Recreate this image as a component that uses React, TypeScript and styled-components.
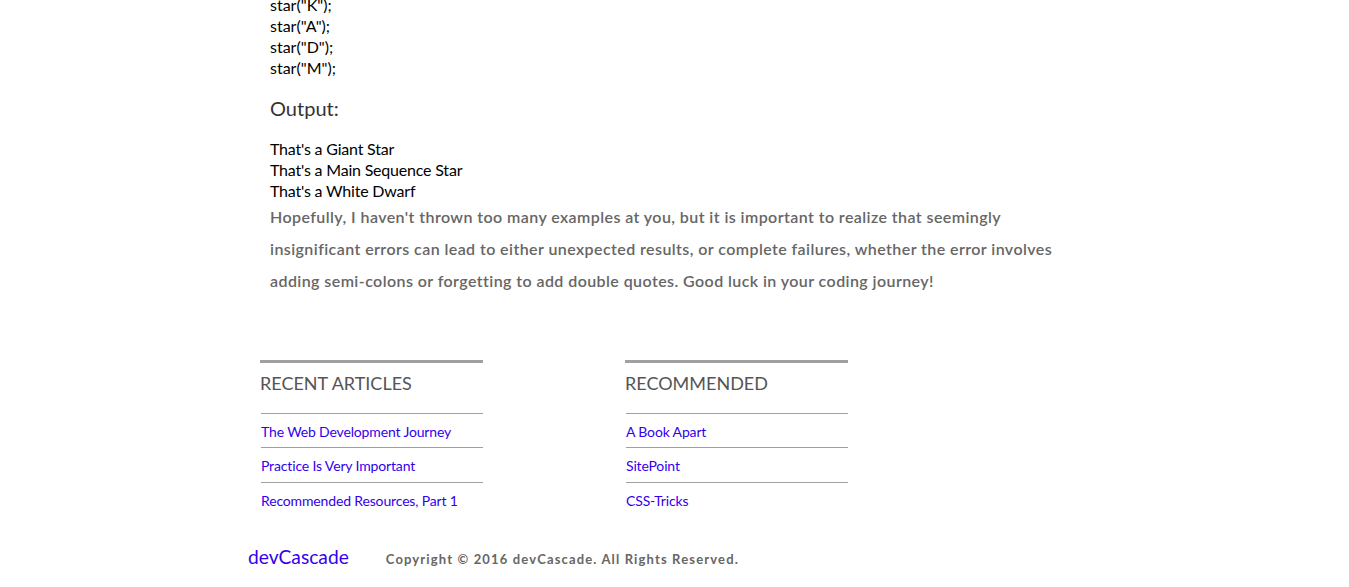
import React from "react";
import styled, { createGlobalStyle } from "styled-components";

const Global = createGlobalStyle`
  html, body { margin: 0; padding: 0; background: #fff; }
  body { font-family: Lato, "Open Sans", sans-serif; overflow: hidden; }
`;

const Page = styled.div`
  width: 829px;
  margin: 0 auto;
`;

const Article = styled.article`
  padding: 0 10px;
  margin-top: -6px;
`;

const CodeLines = styled.div`
  font-size: 16px;
  line-height: 21px;
  color: #000;
`;

const OutputHeading = styled.h3`
  margin: 18px 0 0;
  font-size: 20px;
  line-height: 24px;
  font-weight: 400;
  color: #333;
`;

const OutputLines = styled(CodeLines)`
  margin-top: 18px;
  letter-spacing: -0.2px;
`;

const Paragraph = styled.p`
  margin: 0;
  font-size: 16px;
  line-height: 32px;
  letter-spacing: 0.42px;
  font-weight: 600;
  color: #666;
`;

const Widgets = styled.div`
  display: grid;
  grid-template-columns: repeat(2, 223px);
  column-gap: 142px;
  margin-top: 63px;
`;

const Widget = styled.section`
  border-top: 3px solid #a0a0a0;
`;

const WidgetTitle = styled.h4`
  margin: 0;
  padding: 8px 0 0;
  height: 50px;
  box-sizing: border-box;
  font-size: 18px;
  line-height: 24px;
  font-weight: 400;
  color: #555;
  text-transform: uppercase;
`;

const LinkList = styled.ul`
  list-style: none;
  margin: 0 0 0 1px;
  padding: 0;
`;

const LinkItem = styled.li`
  border-top: 1px solid #a0a0a0;
  padding: 8px 0 7px;
  height: 19px;
  font-size: 14px;
  line-height: 19px;
  letter-spacing: -0.15px;
  &:first-child { height: 18px; }
`;

const Link = styled.a`
  color: #3300ee;
  text-decoration: none;
`;

const FooterBar = styled.footer`
  display: flex;
  align-items: baseline;
  gap: 37px;
  margin: 28px 0 0 -12px;
`;

const Brand = styled.a`
  font-size: 19.2px;
  color: #3300ee;
  text-decoration: none;
`;

const Copyright = styled.span`
  font-size: 13px;
  font-weight: 700;
  letter-spacing: 1.15px;
  color: #666;
`;

const recent = [
  "The Web Development Journey",
  "Practice Is Very Important",
  "Recommended Resources, Part 1",
];
const recommended = ["A Book Apart", "SitePoint", "CSS-Tricks"];

export default function App() {
  return (
    <Page>
      <Global />
      <Article>
        <CodeLines>
          <div>star("K");</div>
          <div>star("A");</div>
          <div>star("D");</div>
          <div>star("M");</div>
        </CodeLines>
        <OutputHeading>Output:</OutputHeading>
        <OutputLines>
          <div>That's a Giant Star</div>
          <div>That's a Main Sequence Star</div>
          <div>That's a White Dwarf</div>
        </OutputLines>
        <Paragraph>
          Hopefully, I haven't thrown too many examples at you, but it is important to realize that
          seemingly insignificant errors can lead to either unexpected results, or complete failures,
          whether the error involves adding semi-colons or forgetting to add double quotes. Good luck
          in your coding journey!
        </Paragraph>
      </Article>
      <Widgets>
        <Widget>
          <WidgetTitle>Recent Articles</WidgetTitle>
          <LinkList>
            {recent.map((t) => (
              <LinkItem key={t}>
                <Link href="#">{t}</Link>
              </LinkItem>
            ))}
          </LinkList>
        </Widget>
        <Widget>
          <WidgetTitle>Recommended</WidgetTitle>
          <LinkList>
            {recommended.map((t) => (
              <LinkItem key={t}>
                <Link href="#">{t}</Link>
              </LinkItem>
            ))}
          </LinkList>
        </Widget>
      </Widgets>
      <FooterBar>
        <Brand href="#">devCascade</Brand>
        <Copyright>Copyright © 2016 devCascade. All Rights Reserved.</Copyright>
      </FooterBar>
    </Page>
  );
}
